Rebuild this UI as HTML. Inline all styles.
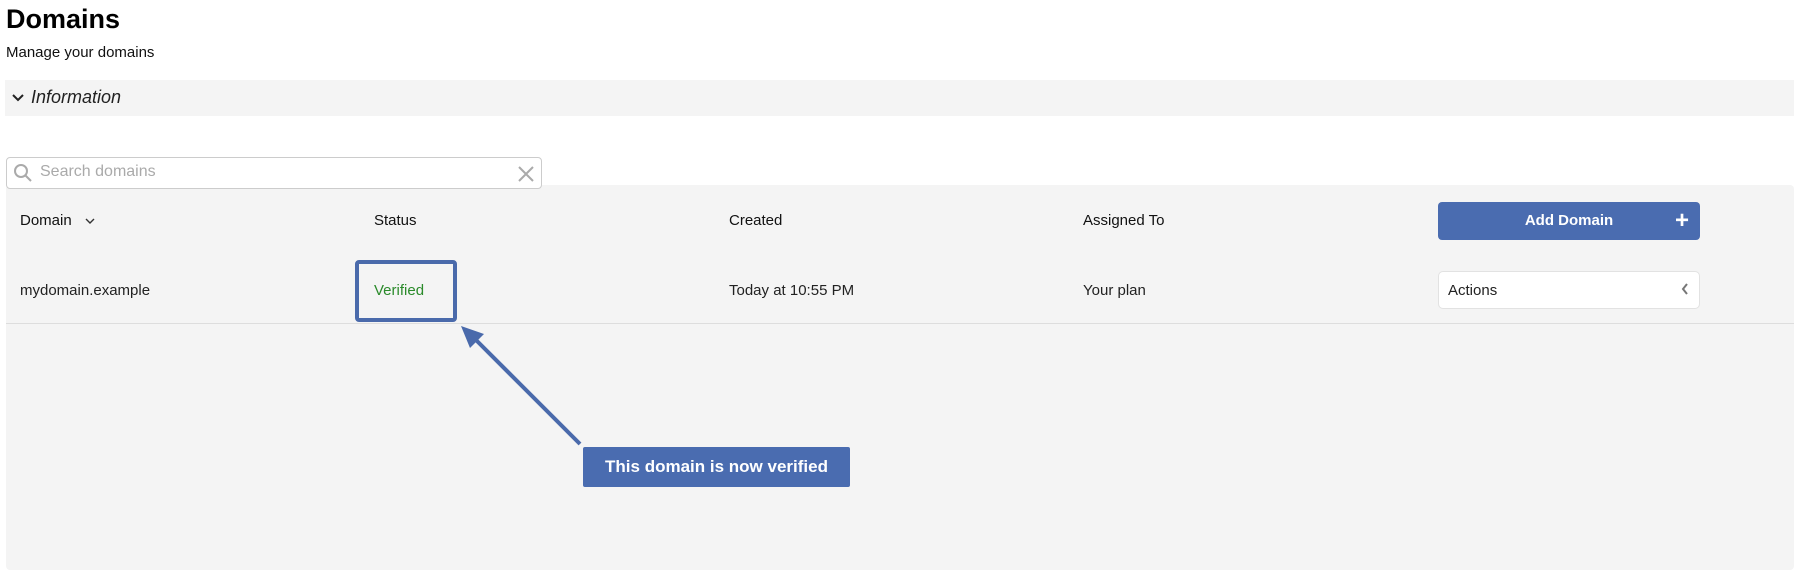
<!DOCTYPE html>
<html><head><style>
body{margin:0;width:1800px;height:582px;background:#fff;font-family:"Liberation Sans",Arial,sans-serif;position:relative;overflow:hidden;color:#222}
.a{position:absolute;white-space:nowrap}
</style></head><body>
<div class="a" style="left:6px;top:4px;font-size:27px;font-weight:bold;color:#000">Domains</div>
<div class="a" style="left:6px;top:44px;font-size:15px;color:#111">Manage your domains</div>
<div class="a" style="left:5px;top:80px;width:1789px;height:36px;background:#f4f4f4"></div>
<svg class="a" style="left:11px;top:93px" width="14" height="10"><path d="M2 2 L7 7 L12 2" stroke="#222" stroke-width="2" fill="none"/></svg>
<div class="a" style="left:31px;top:87px;font-size:18px;font-style:italic;color:#222">Information</div>
<div class="a" style="left:6px;top:185px;width:1788px;height:385px;background:#f4f4f4;border-radius:4px"></div>
<div class="a" style="left:6px;top:157px;width:534px;height:30px;border:1px solid #ccc;border-radius:4px;background:#fff"></div>
<svg class="a" style="left:13px;top:163px" width="20" height="20"><circle cx="8" cy="8" r="6" stroke="#aaa" stroke-width="2" fill="none"/><path d="M12.5 12.5 L18 18" stroke="#aaa" stroke-width="2"/></svg>
<div class="a" style="left:40px;top:163px;font-size:16px;color:#aaa">Search domains</div>
<svg class="a" style="left:517px;top:165px" width="18" height="18"><path d="M2 2L16 16M16 2L2 16" stroke="#aaa" stroke-width="2"/></svg>
<div class="a" style="left:20px;top:212px;font-size:15px;color:#111">Domain</div>
<svg class="a" style="left:85px;top:217px" width="10" height="8"><path d="M1 2L5 6L9 2" stroke="#333" stroke-width="1.4" fill="none"/></svg>
<div class="a" style="left:374px;top:212px;font-size:15px;color:#111">Status</div>
<div class="a" style="left:729px;top:212px;font-size:15px;color:#111">Created</div>
<div class="a" style="left:1083px;top:212px;font-size:15px;color:#111">Assigned To</div>
<div class="a" style="left:1438px;top:202px;width:262px;height:38px;background:#4a6cb0;border-radius:4px"></div>
<div class="a" style="left:1438px;top:212px;width:262px;text-align:center;font-size:15px;font-weight:bold;color:#fff">Add Domain</div>
<div class="a" style="left:1675px;top:207px;font-size:24px;font-weight:bold;color:#fff">+</div>
<div class="a" style="left:20px;top:282px;font-size:15px;color:#222">mydomain.example</div>
<div class="a" style="left:374px;top:282px;font-size:15px;color:#2a8a2a">Verified</div>
<div class="a" style="left:729px;top:282px;font-size:15px;color:#222">Today at 10:55 PM</div>
<div class="a" style="left:1083px;top:282px;font-size:15px;color:#222">Your plan</div>
<div class="a" style="left:1438px;top:271px;width:260px;height:36px;background:#fff;border:1px solid #e2e2e2;border-radius:5px"></div>
<div class="a" style="left:1448px;top:282px;font-size:15px;color:#222">Actions</div>
<svg class="a" style="left:1680px;top:282px" width="10" height="14"><path d="M7 2L3 7L7 12" stroke="#777" stroke-width="2" fill="none"/></svg>
<div class="a" style="left:6px;top:323px;width:1788px;height:1px;background:#ddd"></div>
<div class="a" style="left:355px;top:260px;width:102px;height:62px;border:4px solid #4a6aab;border-radius:4px;box-sizing:border-box"></div>
<svg class="a" style="left:0;top:0" width="1800" height="582"><path d="M580 444 L470 334" stroke="#4a6aab" stroke-width="4"/><path d="M461 326 L484 334 L470 348 Z" fill="#4a6aab"/></svg>
<div class="a" style="left:583px;top:447px;width:267px;height:40px;background:#4a6cb0;border-radius:2px"></div>
<div class="a" style="left:583px;top:457px;width:267px;text-align:center;font-size:17px;font-weight:bold;color:#fff">This domain is now verified</div>
</body></html>
